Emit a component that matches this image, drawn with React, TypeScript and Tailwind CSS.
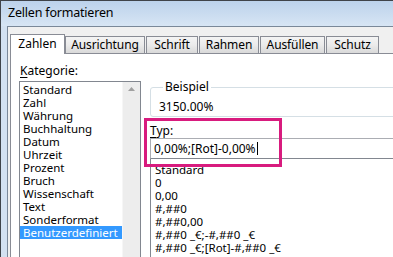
import React from "react";

const font = { fontFamily: '"Noto Sans", "Open Sans", sans-serif' };

const categories = [
  "Standard",
  "Zahl",
  "Währung",
  "Buchhaltung",
  "Datum",
  "Uhrzeit",
  "Prozent",
  "Bruch",
  "Wissenschaft",
  "Text",
  "Sonderformat",
  "Benutzerdefiniert",
];

const types = [
  "Standard",
  "0",
  "0,00",
  "#,##0",
  "#,##0,00",
  "#,##0 _€;-#,##0 _€",
  "#,##0 _€;[Rot]-#,##0 _€",
  "#,##0,00 _€;-#,##0,00 _€",
];

const tabs = [
  { label: "Ausrichtung", w: "w-[80px]", ml: "ml-0" },
  { label: "Schrift", w: "w-[52px]", ml: "ml-[1px]" },
  { label: "Rahmen", w: "w-[60px]", ml: "ml-[1px]" },
  { label: "Ausfüllen", w: "w-[65px]", ml: "ml-[1px]" },
  { label: "Schutz", w: "w-[53px]", ml: "ml-[1px]" },
];

export default function App() {
  return (
    <div
      className="w-[393px] h-[257px] overflow-hidden flex flex-col border-l border-t border-[#3f4349] bg-[#cddcee] text-black text-[11.5px]"
      style={font}
    >
      {/* Title bar */}
      <div className="h-[25px] shrink-0 flex items-center pl-[7px] bg-gradient-to-b from-[#bcd2eb] to-[#d7e5f4] text-[12.5px] tracking-[-0.2px]">
        Zellen formatieren
      </div>
      {/* Body with frame */}
      <div className="flex-1 flex pl-[6px] bg-[#d3e1f1] min-h-0">
        <div className="flex-1 flex flex-col border-l border-t border-[#7a8899] bg-[#f0f0f0] pt-[7px] pl-[2px] min-h-0">
          {/* Tabs */}
          <div className="flex items-end h-[19px] shrink-0 relative z-10">
            <div className="w-[55px] h-[20px] -mb-px bg-white border-l border-t border-r border-[#898c95] flex items-center justify-center pb-[2px] text-[12px]">
              Zahlen
            </div>
            {tabs.map((t) => (
              <div
                key={t.label}
                className={`${t.w} ${t.ml} h-[17px] border-l border-t border-r border-[#898c95] bg-gradient-to-b from-[#f4f4f4] via-[#ebebeb] to-[#d9d9d9] flex items-center justify-center text-[12px] tracking-[-0.1px]`}
              >
                {t.label}
              </div>
            ))}
          </div>
          {/* Panel */}
          <div className="flex-1 flex bg-white border-l border-t border-[#898c95] min-h-0 pl-[8px]">
            {/* Left column */}
            <div className="flex flex-col pt-[10px] w-[122px] shrink-0">
              <div className="h-[14px] leading-[14px] pl-[1px] text-[12px]">
                <span className="underline underline-offset-[2px]">K</span>ategorie:
              </div>
              <div className="mt-[3px] flex-1 flex border-l border-t border-r border-[#828790]">
                <div className="w-[102px] pt-[1px]">
                  {categories.map((c) => (
                    <div
                      key={c}
                      className={`h-[13px] leading-[13px] pl-[3px] whitespace-nowrap ${
                        c === "Benutzerdefiniert" ? "bg-[#3399ff] text-white" : ""
                      }`}
                    >
                      {c}
                    </div>
                  ))}
                </div>
                <div className="flex-1 bg-[#ededed] border-l border-[#f6f6f6] flex justify-center pt-[5px]">
                  <svg width="7" height="4" viewBox="0 0 7 4">
                    <path d="M0 4 L3.5 0 L7 4 Z" fill="#a0a0a0" />
                  </svg>
                </div>
              </div>
            </div>
            {/* Right column */}
            <div className="ml-[9px] w-[300px] shrink-0 flex flex-col pt-[26px]">
              <fieldset className="border border-[#d5dfe5] rounded-[3px] pl-[8px] pb-[2px]">
                <legend className="ml-[4px] px-[2px] h-[14px] leading-[14px] text-[12px]">Beispiel</legend>
                <div className="h-[14px] leading-[14px] mt-[6px] text-[12px]">3150.00%</div>
              </fieldset>
              <div className="relative mt-[7px]">
                <div className="h-[14px] leading-[14px] text-[12px]">
                  <span className="underline underline-offset-[2px]">T</span>yp:
                </div>
                <div className="h-[21px] border border-[#abadb3] border-b-[#828790] flex items-center pl-[3px] whitespace-nowrap text-[12px]">
                  0,00%;[Rot]-0,00%
                  <span className="inline-block w-px h-[13px] bg-black ml-[1px]" />
                </div>
                <div className="absolute -left-[6px] -top-[6px] w-[138px] h-[49px] border-[3px] border-[#d81b7e] z-10 pointer-events-none" />
              </div>
              <div className="flex-1 border-l border-[#828790] pt-[4px] pl-[4px]">
                {types.map((t) => (
                  <div key={t} className="h-[13px] leading-[13px] whitespace-nowrap">
                    {t}
                  </div>
                ))}
              </div>
            </div>
          </div>
        </div>
      </div>
    </div>
  );
}
